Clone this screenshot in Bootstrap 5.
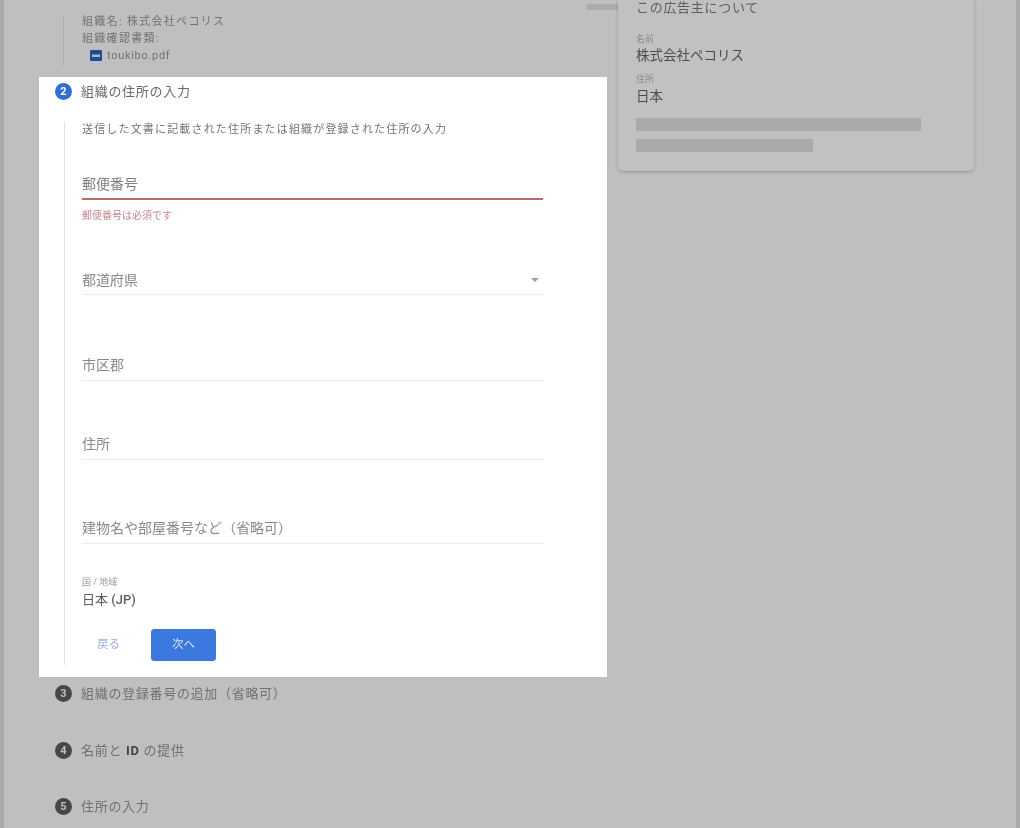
<!DOCTYPE html>
<html lang="ja"><head><meta charset="utf-8"><title>組織の住所の入力</title>
<link href="https://cdn.jsdelivr.net/npm/bootstrap@5.3.0/dist/css/bootstrap.min.css" rel="stylesheet">
<style>
html,body{height:828px;overflow:hidden;background:#bfbfbf;}
body{font-family:Roboto,"Noto Sans CJK JP",sans-serif;color:#3c4043;}
.shell{height:828px;border-left:4px solid #a9a9a9;border-right:4px solid #a9a9a9;padding-left:35px;filter:blur(.7px);overflow:hidden;}
.main-col{width:568px;flex:none;}
.summary{height:77px;padding:13px 0 0 43px;font-size:11px;line-height:17px;color:#727272;position:relative;letter-spacing:1.3px;}
.rail-top{width:1px;height:51px;background:#adadad;margin:2px 0 0 24px;position:absolute;left:0;top:13px;}
.file-row{padding-left:8px;gap:5px;letter-spacing:.7px;}
.pdf{width:12px;height:11px;display:block;}
.ghost{position:absolute;right:-11px;top:4px;width:31px;height:6px;background:#acacac;}
.panel{height:600px;background:#fff;padding-left:16px;}
.stepnum{width:17px;height:17px;border-radius:50%;color:#fff;font-size:11px;font-weight:700;line-height:17px;text-align:center;flex:none;letter-spacing:0;}
.num-active{background:#2f6fd6;}
.num-idle{background:#474747;color:#bfbfbf;}
.step-head{gap:9px;font-size:13px;line-height:17px;color:#6a6a6a;letter-spacing:.7px;}
.step-head b{color:#444;}
.panel .step-head{padding-top:6px;}
.step-body{margin:22px 0 0 9px;border-left:1px solid #e3e3e3;height:543px;padding-left:17px;width:479px;}
.hint{font-size:11px;line-height:14px;padding-top:1px;color:#747474;letter-spacing:1.17px;}
.fld{font-size:14px;line-height:20px;color:#8a8a8a;border-bottom:1px solid #ececec;padding-bottom:5px;display:flex;justify-content:space-between;align-items:center;}
.f1{margin-top:37px;border-bottom:2px solid #bb6b70;color:#808080;padding-bottom:4px;}
.err{font-size:10px;line-height:14px;color:#c9848c;margin-top:9px;}
.f2{margin-top:47px;padding-bottom:4px;}
.f3{margin-top:60px;}
.f4{margin-top:53px;}
.f5{margin-top:58px;}
.caret{width:0;height:0;border-left:4.5px solid transparent;border-right:4.5px solid transparent;border-top:4.5px solid #a0a0a0;margin-right:4px;}
.mini{font-size:9px;line-height:12px;color:#9a9a9a;}
.country-box{margin-top:32px;}
.country{font-size:13px;line-height:18px;color:#5c5c5c;margin-top:3px;}
.country b{font-weight:500;}
.btnrow{margin-top:20px;gap:31px;padding-left:15px;}
.back-link{font-size:11.5px;color:#9db3e4;}
.next-btn{--bs-btn-bg:#3b78e0;--bs-btn-border-color:#3b78e0;--bs-btn-color:#dce7fb;--bs-btn-padding-x:0;--bs-btn-padding-y:0;--bs-btn-font-size:11.5px;width:65px;height:32px;border-radius:3px;}
.idle-steps{padding:8px 0 0 16px;gap:39.5px;}
.idle-steps .step-head{color:#707070;}
.side{width:356px;flex:none;margin-left:11px;height:171px;background:#c1c1c1;border:0;border-radius:0 0 5px 5px;box-shadow:0 1px 3px rgba(0,0,0,.25);padding:1px 18px 0;}
.side-title{font-size:13px;line-height:14px;color:#5e5e5e;letter-spacing:.7px;}
.side-val{font-size:13.5px;line-height:18px;color:#4c4c4c;margin-top:1px;}
.side .mini{color:#8c8c8c;}
.tag-name{margin-top:18px;}
.tag-addr{margin-top:9px;}
.val-addr{margin-top:2px;}
.bar{height:13px;background:#aaa;margin-top:8px;}
.bw1{width:285px;margin-top:13px;}
.bw2{width:177px;}
</style></head><body>
<div class="shell d-flex">
 <div class="main-col">
  <div class="summary">
   <div class="rail-top"></div>
   <div>組織名: 株式会社ペコリス</div>
   <div>組織確認書類:</div>
   <div class="d-flex align-items-center file-row"><svg class="pdf" viewBox="0 0 12 11"><rect width="12" height="11" rx="1" fill="#1f4f8f"/><rect x="2" y="4.5" width="8" height="2.5" fill="#9fb6d6"/></svg><span>toukibo.pdf</span></div>
   <div class="ghost"></div>
  </div>
  <div class="panel">
   <div class="d-flex step-head align-items-center"><span class="stepnum num-active">2</span><span>組織の住所の入力</span></div>
   <div class="step-body">
    <div class="hint">送信した文書に記載された住所または組織が登録された住所の入力</div>
    <div class="fld f1">郵便番号</div>
    <div class="err">郵便番号は必須です</div>
    <div class="fld f2"><span>都道府県</span><span class="caret"></span></div>
    <div class="fld f3">市区郡</div>
    <div class="fld f4">住所</div>
    <div class="fld f5">建物名や部屋番号など（省略可）</div>
    <div class="country-box"><div class="mini">国 / 地域</div><div class="country">日本 <b>(JP)</b></div></div>
    <div class="d-flex align-items-center btnrow"><span class="back-link">戻る</span><button type="button" class="btn next-btn">次へ</button></div>
   </div>
  </div>
  <div class="d-flex flex-column idle-steps">
   <div class="d-flex step-head align-items-center"><span class="stepnum num-idle">3</span><span>組織の登録番号の追加（省略可）</span></div>
   <div class="d-flex step-head align-items-center"><span class="stepnum num-idle">4</span><span>名前と <b>ID</b> の提供</span></div>
   <div class="d-flex step-head align-items-center"><span class="stepnum num-idle">5</span><span>住所の入力</span></div>
  </div>
 </div>
 <div class="card side">
  <div class="side-title">この広告主について</div>
  <div class="mini tag-name">名前</div>
  <div class="side-val">株式会社ペコリス</div>
  <div class="mini tag-addr">住所</div>
  <div class="side-val val-addr">日本</div>
  <div class="bar bw1"></div>
  <div class="bar bw2"></div>
 </div>
</div>
</body></html>
